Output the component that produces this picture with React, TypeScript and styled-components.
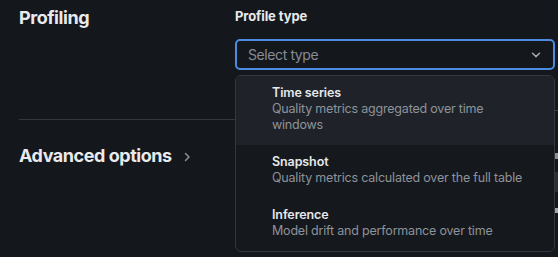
import React from "react";
import styled, { createGlobalStyle } from "styled-components";

const Global = createGlobalStyle`
  html, body { margin: 0; padding: 0; background: #14171c; overflow: hidden; }
  body { font-family: Inter, "Noto Sans", "DejaVu Sans", sans-serif; color: #e6e8eb; -webkit-font-smoothing: antialiased; }
`;

const Page = styled.div`
  display: grid;
  grid-template-columns: 235px 320px 3px;
  width: 558px;
  height: 257px;
  overflow: hidden;
`;

const LeftCol = styled.div`
  display: flex;
  flex-direction: column;
  padding-left: 19px;
`;

const SectionTitle = styled.h2`
  margin: 6px 0 0;
  font-size: 18px;
  line-height: 24px;
  font-weight: 700;
  color: #e8eaed;
  letter-spacing: -0.45px;
`;

const Divider = styled.div`
  margin-top: 89px;
  height: 1px;
  background: #34383e;
  margin-right: -20px;
`;

const Advanced = styled.button`
  display: flex;
  align-items: center;
  gap: 11px;
  margin-top: 24px;
  padding: 0;
  border: 0;
  background: none;
  font-family: inherit;
  font-size: 18px;
  line-height: 24px;
  font-weight: 700;
  color: #e8eaed;
  cursor: pointer;
  letter-spacing: -0.45px;
  svg { color: #8a9099; margin-top: 1px; }
`;

const RightCol = styled.div`
  position: relative;
  display: flex;
  flex-direction: column;
`;

const Label = styled.label`
  margin-top: 8px;
  font-size: 13px;
  line-height: 16px;
  font-weight: 700;
  color: #e8eaed;
  letter-spacing: -0.1px;
`;

const SelectBox = styled.div`
  margin-top: 15px;
  height: 31px;
  box-sizing: border-box;
  border: 2px solid #4b8be0;
  border-radius: 5px;
  display: flex;
  align-items: center;
  justify-content: space-between;
  padding: 0 12px 0 11px;
  font-size: 14px;
  letter-spacing: -0.4px;
  color: #868d96;
  svg { color: #a3a9b0; }
`;

const Menu = styled.ul`
  position: absolute;
  top: 75px;
  left: 0;
  width: 320px;
  box-sizing: border-box;
  margin: 0;
  padding: 0;
  list-style: none;
  background: #15181d;
  border: 1px solid #33373e;
  border-radius: 6px;
  overflow: hidden;
  z-index: 2;
`;

const Item = styled.li<{ $active?: boolean }>`
  padding: 8px 16px 12px 36px;
  background: ${(p) => (p.$active ? "#1f2329" : "transparent")};
`;

const ItemTitle = styled.div`
  font-size: 12.5px;
  line-height: 17px;
  font-weight: 600;
  letter-spacing: -0.1px;
  color: #e6e8eb;
`;

const ItemDesc = styled.div`
  font-size: 12.5px;
  line-height: 16px;
  letter-spacing: -0.2px;
  color: #8d939b;
  max-width: 252px;
`;

const Behind = styled.div`
  display: flex;
  flex-direction: column;
`;

const BehindLine = styled.div`
  margin-top: 110px;
  height: 1px;
  background: #3a3e44;
`;

const BehindMark = styled.div<{ $top: number; $h: number; $c: string }>`
  margin-top: ${(p) => p.$top}px;
  height: ${(p) => p.$h}px;
  background: ${(p) => p.$c};
  width: 3px;
`;

const items = [
  { title: "Time series", desc: "Quality metrics aggregated over time windows", active: true },
  { title: "Snapshot", desc: "Quality metrics calculated over the full table" },
  { title: "Inference", desc: "Model drift and performance over time" },
];

export default function App() {
  return (
    <>
      <Global />
      <Page>
        <LeftCol>
          <SectionTitle>Profiling</SectionTitle>
          <Divider />
          <Advanced>
            Advanced options
            <svg width="8" height="10" viewBox="0 0 8 10" fill="none">
              <path d="M2.5 1.5 L6 5 L2.5 8.5" stroke="currentColor" strokeWidth="1.5" strokeLinecap="round" strokeLinejoin="round" />
            </svg>
          </Advanced>
        </LeftCol>
        <RightCol>
          <Label>Profile type</Label>
          <SelectBox>
            <span>Select type</span>
            <svg width="10" height="6" viewBox="0 0 10 6" fill="none">
              <path d="M1.5 1.2 L5 4.6 L8.5 1.2" stroke="currentColor" strokeWidth="1.5" strokeLinecap="round" strokeLinejoin="round" />
            </svg>
          </SelectBox>
          <Menu>
            {items.map((it) => (
              <Item key={it.title} $active={it.active}>
                <ItemTitle>{it.title}</ItemTitle>
                <ItemDesc>{it.desc}</ItemDesc>
              </Item>
            ))}
          </Menu>
        </RightCol>
        <Behind>
          <BehindLine />
          <BehindMark $top={42} $h={6} $c="#8b9098" />
          <BehindMark $top={13} $h={20} $c="#2c3036" />
          <BehindMark $top={16} $h={5} $c="#a0a5ab" />
        </Behind>
      </Page>
    </>
  );
}
